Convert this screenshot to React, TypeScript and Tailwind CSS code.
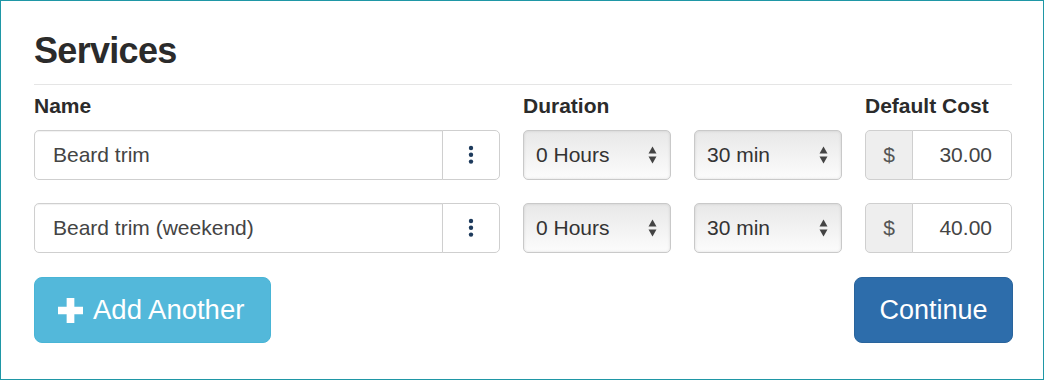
const font = "font-['Liberation_Sans',Arial,sans-serif]";

const rows = [
  { name: "Beard trim", hours: "0 Hours", mins: "30 min", cost: "30.00" },
  { name: "Beard trim (weekend)", hours: "0 Hours", mins: "30 min", cost: "40.00" },
];

function Dots() {
  return (
    <svg width="6" height="20" viewBox="0 0 6 20" className="block">
      <circle cx="3" cy="3" r="2.2" fill="#1d3a5c" />
      <circle cx="3" cy="9.8" r="2.2" fill="#1d3a5c" />
      <circle cx="3" cy="16.6" r="2.2" fill="#1d3a5c" />
    </svg>
  );
}

function Arrows() {
  return (
    <svg width="9" height="18" viewBox="0 0 9 18" className="block">
      <path d="M4.5 0.5 L8.5 7.5 H0.5 Z" fill="#444" />
      <path d="M4.5 17.5 L8.5 10.5 H0.5 Z" fill="#444" />
    </svg>
  );
}

function FakeSelect({ value }: { value: string }) {
  return (
    <div className="flex h-[50px] items-center justify-between rounded-[5px] border border-[#c9c9c9] bg-linear-to-b from-[#e8e8e8] to-[#fcfcfc] pr-[13px] pl-[12px] text-[21px] leading-6 text-[#333] shadow-[inset_0_0_3px_rgba(0,0,0,0.12)]">
      <span>{value}</span>
      <Arrows />
    </div>
  );
}

export default function App() {
  return (
    <div
      className={`${font} box-border h-[380px] w-[1044px] border border-[#1f97a6] bg-white pt-[30px] pr-[31px] pl-[33px]`}
    >
      <h3 className="border-b border-[#e5e5e5] pb-[13px] text-[36px] leading-10 font-bold tracking-[-0.7px] text-[#2b2b2b]">
        Services
      </h3>

      <div className="mt-[9px] grid grid-cols-[466px_148px_148px_147px] gap-x-[23px] gap-y-[23px]">
        <div className="text-[21px] leading-6 font-bold text-[#2b2b2b]">Name</div>
        <div className="col-span-2 text-[21px] leading-6 font-bold text-[#2b2b2b]">
          Duration
        </div>
        <div className="text-[21px] leading-6 font-bold text-[#2b2b2b]">
          Default Cost
        </div>

        {rows.map((row, i) => (
          <div key={i} className="contents">
            <div className={`flex h-[50px] ${i === 0 ? "-mt-[11px]" : ""}`}>
              <div className="flex flex-1 items-center rounded-l-[5px] border border-[#cfcfcf] bg-white pl-[18px] text-[21px] leading-6 text-[#444] shadow-[inset_0_1px_1px_rgba(0,0,0,0.06)]">
                {row.name}
              </div>
              <div className="-ml-px flex w-[58px] items-center justify-center rounded-r-[5px] border border-[#cfcfcf] bg-white">
                <Dots />
              </div>
            </div>
            <div className={i === 0 ? "-mt-[11px]" : ""}>
              <FakeSelect value={row.hours} />
            </div>
            <div className={i === 0 ? "-mt-[11px]" : ""}>
              <FakeSelect value={row.mins} />
            </div>
            <div className={`flex h-[50px] ${i === 0 ? "-mt-[11px]" : ""}`}>
              <div className="flex w-[48px] items-center justify-center rounded-l-[5px] border border-[#cfcfcf] bg-[#eeeeee] text-[21px] leading-6 text-[#555]">
                $
              </div>
              <div className="-ml-px flex flex-1 items-center justify-end rounded-r-[5px] border border-[#cfcfcf] bg-white pr-[19px] text-[21px] leading-6 text-[#444]">
                {row.cost}
              </div>
            </div>
          </div>
        ))}
      </div>

      <div className="mt-[24px] flex items-center justify-between">
        <button
          type="button"
          className="flex h-[66px] w-[237px] items-center gap-[10px] rounded-[8px] border border-[#49b5d6] bg-[#53b8da] pl-[23px] text-[27.5px] text-white"
        >
          <svg width="25" height="25" viewBox="0 0 24 24" className="block">
            <path
              d="M8.3 0h7.4v8.3H24v7.4h-8.3V24H8.3v-8.3H0V8.3h8.3z"
              fill="#fff"
            />
          </svg>
          <span>Add Another</span>
        </button>
        <button
          type="button"
          className="mr-[-1px] h-[66px] w-[159px] rounded-[8px] border border-[#29649c] bg-[#2d6dab] text-[27px] text-white"
        >
          Continue
        </button>
      </div>
    </div>
  );
}
